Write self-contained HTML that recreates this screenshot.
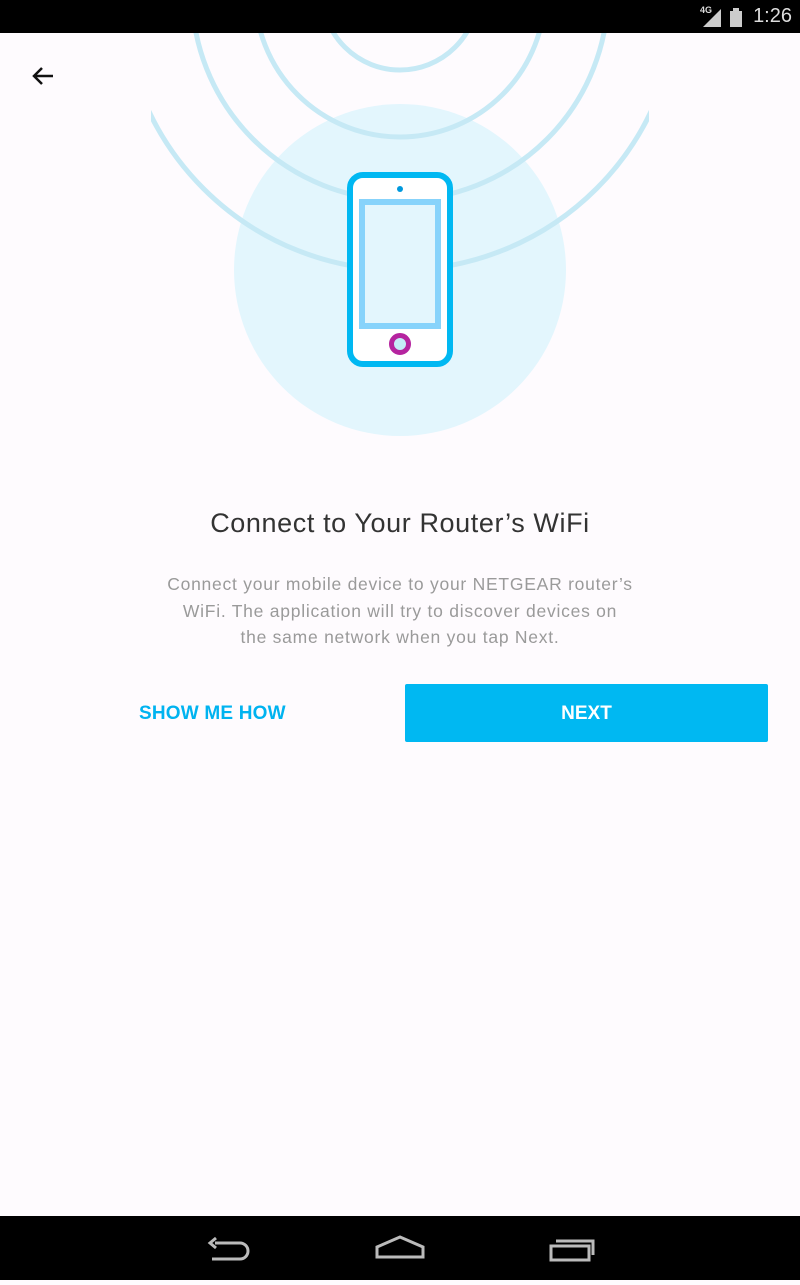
<!DOCTYPE html><html><head><style>
body{margin:0;width:800px;height:1280px;background:#fefbfe;position:relative;overflow:hidden;font-family:"Liberation Sans",Roboto,sans-serif}
.sb{position:absolute;top:0;left:0;width:800px;height:33px;background:#000}
.nb{position:absolute;bottom:0;left:0;width:800px;height:64px;background:#000}
h1{position:absolute;top:508px;left:0;width:800px;text-align:center;margin:0;font-weight:normal;font-size:27px;letter-spacing:0.6px;color:#333}
p{position:absolute;top:571px;left:0;width:800px;text-align:center;margin:0;font-size:17.5px;letter-spacing:0.75px;line-height:26.5px;color:#9a9a9a}
.show{position:absolute;left:139px;top:703px;font-size:19px;font-weight:bold;color:#00b3f0;letter-spacing:0.2px}
.next{position:absolute;left:405px;top:684px;width:363px;height:58px;background:#00b8f2;border-radius:2px;color:#fff;font-weight:bold;font-size:19px;text-align:center;line-height:60px}
</style></head><body>
<div class="sb"><span style="position:absolute;right:8px;top:5px;color:#ddd;font-size:20px">1:26</span>
<span style="position:absolute;left:700px;top:5px;color:#ddd;font-size:9px;font-weight:bold">4G</span>
<svg style="position:absolute;left:700px;top:5px" height="22" width="50"><polygon points="3,22 21,22 21,4" fill="#ccc"/><rect x="30" y="6" width="12" height="16" fill="#ccc"/><rect x="33" y="3" width="6" height="3" fill="#ccc"/></svg></div>
<svg style="position:absolute;left:0;top:33px" width="800" height="420" viewBox="0 33 800 420">
<defs><clipPath id="c"><rect x="151" y="33" width="498" height="420"/></clipPath></defs>
<circle cx="400" cy="270" r="166" fill="#e3f6fd"/>
<g clip-path="url(#c)" fill="none" stroke="#c6e9f5" stroke-width="5">
<circle cx="400" cy="-8" r="78"/><circle cx="400" cy="-8" r="145"/><circle cx="400" cy="-8" r="208"/><circle cx="400" cy="-8" r="278"/></g>
<rect x="350" y="175" width="100" height="189" rx="13" fill="#fff" stroke="#00b8f2" stroke-width="6"/>
<rect x="362" y="202" width="76" height="124" fill="#e3f6fd" stroke="#87d3fb" stroke-width="6"/>
<circle cx="400" cy="189" r="3" fill="#0099dd"/>
<circle cx="400" cy="344" r="8.5" fill="#c4ecf7" stroke="#b5249f" stroke-width="5"/>
</svg>
<svg style="position:absolute;left:30px;top:64px" width="26" height="24"><path d="M23 12H4M12 4L4 12L12 20" fill="none" stroke="#111" stroke-width="2.5"/></svg>
<h1>Connect to Your Router’s WiFi</h1>
<p>Connect your mobile device to your NETGEAR router’s<br>WiFi. The application will try to discover devices on<br>the same network when you tap Next.</p>
<div class="show">SHOW ME HOW</div>
<div class="next">NEXT</div>
<div class="nb"><svg width="800" height="64" fill="none" stroke="#bbb" stroke-width="3">
<path d="M215 27h25a8 8 0 0 1 0 16h-28M216 22l-6 5 6 5"/>
<path d="M377 41v-10l23-10 23 10v10z"/>
<path d="M551 30h38v14h-38zM556 25h37v14"/></svg></div>
</body></html>
